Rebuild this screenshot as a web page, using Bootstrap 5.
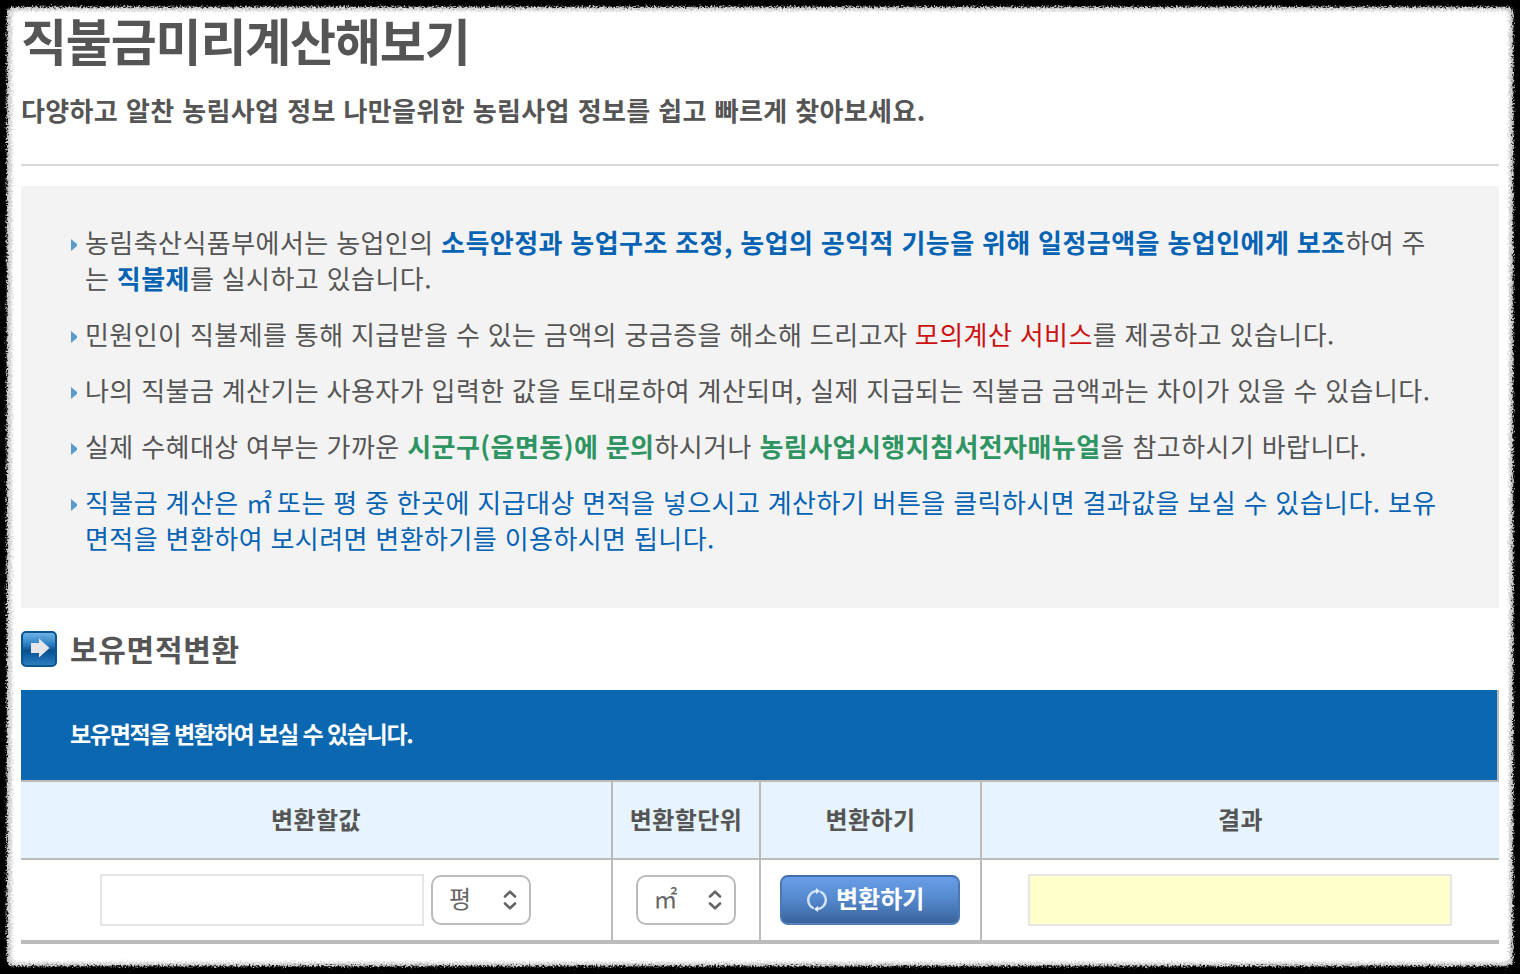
<!DOCTYPE html>
<html lang="ko">
  <head>
    <meta charset="UTF-8" />
    <meta name="viewport" content="width=device-width, initial-scale=1.0" />
    <title>직불금미리계산해보기</title>
    <link
      href="https://cdn.jsdelivr.net/npm/bootstrap@5.3.3/dist/css/bootstrap.min.css"
      rel="stylesheet"
    />

    <style>
      body {
        width: 1520px;
        height: 974px;
        overflow: hidden;
        background: #000;
        color: #555;
        font-family: "Noto Sans CJK KR", sans-serif;
      }
      /* torn paper edge behind the page */
      .paper-edge {
        position: absolute;
        inset: 0;
        z-index: 0;
      }
      .page-body {
        position: relative;
        z-index: 1;
        padding: 6px 21px 0;
        white-space: nowrap;
      }
      .page-title {
        height: 70px;
        line-height: 66px;
        font-size: 50px;
        letter-spacing: -1.15px;
      }
      .page-desc {
        height: 90px;
        padding-top: 16px;
        line-height: 36px;
        font-size: 26px;
        letter-spacing: 0.35px;
        word-spacing: 0.2px;
        border-bottom: 2px solid #d9d9d9;
      }
      .info-box {
        height: 422px;
        margin-top: 20px;
        padding: 38px 0 0 50px;
        background: #f3f3f3;
        font-size: 26px;
        line-height: 36px;
        letter-spacing: 0.45px;
        word-spacing: -0.3px;
      }
      .info-box li {
        display: flex;
        margin-bottom: 20px;
      }
      .info-box li svg {
        flex: none;
        width: 6px;
        height: 12px;
        margin: 15px 8px 0 0;
      }
      .area-unit {
        letter-spacing: -2.5px;
      }
      .c-blue {
        color: #0663b3;
      }
      .c-red {
        color: #cc1111;
      }
      .c-green {
        color: #2e9461;
      }
      .section-title {
        height: 82px;
        gap: 13px;
        font-size: 30px;
        letter-spacing: 0.7px;
        line-height: 40px;
      }
      .section-title span {
        padding-bottom: 2px;
      }
      .conv-table {
        width: 1478px;
        table-layout: fixed;
        border-collapse: separate;
        border-spacing: 0;
        text-align: center;
      }
      .conv-table th,
      .conv-table td {
        padding: 0;
        vertical-align: middle;
        border-right: 2px solid #bbb;
        border-bottom: 2px solid #bbb;
      }
      .conv-table .conv-caption {
        height: 92px;
        padding: 0 0 4px 49px;
        background: #0c67b1;
        color: #fff;
        text-align: left;
        font-size: 23px;
        letter-spacing: -1.3px;
        word-spacing: -0.5px;
      }
      .conv-table .conv-head th {
        height: 78px;
        padding-bottom: 2px;
        background: #e7f4fe;
        font-size: 24px;
        letter-spacing: 0.4px;
      }
      .conv-table td {
        height: 84px;
        border-bottom-width: 4px;
      }
      .conv-table .conv-head th:last-child,
      .conv-table td:last-child {
        border-right: 0;
      }
      .conv-table td:not(:first-child) {
        padding-right: 1px;
      }
      .value-group {
        gap: 7px;
        padding-right: 1px;
      }
      .value-input {
        width: 324px;
        height: 52px;
        border: 2px solid #e6e6e6;
        border-radius: 0;
      }
      .result-input {
        width: 424px;
        height: 52px;
        border: 2px solid #e6e6e6;
        border-radius: 0;
        background: #ffffcc;
      }
      .unit-select {
        width: 100px;
        height: 50px;
        padding: 0 12px 0 16px;
        border: 2px solid #bbb;
        border-radius: 10px;
        background: #fff;
        color: #666;
        font-size: 24px;
      }
      .unit-select span {
        padding-bottom: 4px;
      }
      .convert-btn {
        width: 180px;
        height: 50px;
        padding: 0 0 0 24px;
        border: 2px solid #4a78b5;
        border-top-color: #426fac;
        border-bottom-color: #5380b8;
        border-radius: 8px;
        background: linear-gradient(#699fe8, #568acf 45%, #38639b);
        color: #fff;
        font-size: 24px;
        font-weight: 700;
      }
      .convert-btn span {
        padding-bottom: 4px;
      }
    </style>
  </head>
  <body>
    <svg class="paper-edge" width="1520" height="974" viewBox="0 0 1520 974">
      <defs>
        <filter id="rough" filterUnits="userSpaceOnUse" x="0" y="0" width="1520" height="974" color-interpolation-filters="sRGB">
          <feTurbulence type="fractalNoise" baseFrequency="0.55" numOctaves="2" seed="4" />
          <feDisplacementMap in="SourceGraphic" scale="7" xChannelSelector="R" yChannelSelector="G" />
        </filter>
      </defs>
      <rect width="1520" height="974" fill="#000" />
      <g filter="url(#rough)">
        <rect width="1520" height="974" fill="#000" />
        <rect x="6.500" y="6.500" width="1507" height="960" rx="6" fill="#777" />
        <rect x="7.500" y="7.500" width="1505" height="958" rx="6" fill="#d0d0d0" />
        <rect x="10.500" y="9.500" width="1499" height="954" rx="5" fill="#e4e4e4" />
        <rect x="12.500" y="11.500" width="1496" height="950" rx="5" fill="#fff" />
      </g>
      <rect x="16" y="16" width="1489" height="942" fill="#fff" />
    </svg>

    <main class="page-body">
      <h1 class="page-title fw-bold m-0">직불금미리계산해보기</h1>
      <p class="page-desc fw-bold m-0">다양하고 알찬 농림사업 정보 나만을위한 농림사업 정보를 쉽고 빠르게 찾아보세요.</p>

      <ul class="info-box list-unstyled mb-0">
        <li>
          <svg viewBox="0 0 6 12"><path d="M0 0 6 5v2L0 12z" fill="#5a9bcb" /></svg>
          <div>
            농림축산식품부에서는 농업인의 <b class="c-blue">소득안정과 농업구조 조정, 농업의 공익적 기능을 위해 일정금액을 농업인에게 보조</b>하여 주<br />는 <b class="c-blue">직불제</b>를 실시하고 있습니다.
          </div>
        </li>
        <li>
          <svg viewBox="0 0 6 12"><path d="M0 0 6 5v2L0 12z" fill="#5a9bcb" /></svg>
          <div>민원인이 직불제를 통해 지급받을 수 있는 금액의 궁금증을 해소해 드리고자 <span class="c-red">모의계산 서비스</span>를 제공하고 있습니다.</div>
        </li>
        <li>
          <svg viewBox="0 0 6 12"><path d="M0 0 6 5v2L0 12z" fill="#5a9bcb" /></svg>
          <div>나의 직불금 계산기는 사용자가 입력한 값을 토대로하여 계산되며, 실제 지급되는 직불금 금액과는 차이가 있을 수 있습니다.</div>
        </li>
        <li>
          <svg viewBox="0 0 6 12"><path d="M0 0 6 5v2L0 12z" fill="#5a9bcb" /></svg>
          <div>실제 수혜대상 여부는 가까운 <b class="c-green">시군구(읍면동)에 문의</b>하시거나 <b class="c-green">농림사업시행지침서전자매뉴얼</b>을 참고하시기 바랍니다.</div>
        </li>
        <li>
          <svg viewBox="0 0 6 12"><path d="M0 0 6 5v2L0 12z" fill="#5a9bcb" /></svg>
          <div class="c-blue">직불금 계산은 <span class="area-unit">㎡</span> 또는 평 중 한곳에 지급대상 면적을 넣으시고 계산하기 버튼을 클릭하시면 결과값을 보실 수 있습니다. 보유<br />면적을 변환하여 보시려면 변환하기를 이용하시면 됩니다.</div>
        </li>
      </ul>

      <h2 class="section-title d-flex align-items-center fw-bold m-0">
        <svg width="36" height="36" viewBox="0 0 36 36">
          <defs>
            <linearGradient id="icoBg" x1="0" y1="0" x2="0" y2="1">
              <stop offset="0" stop-color="#74b5e8" />
              <stop offset="0.35" stop-color="#2f82c4" />
              <stop offset="0.55" stop-color="#064f8e" />
              <stop offset="0.75" stop-color="#1565a8" />
              <stop offset="1" stop-color="#307fc0" />
            </linearGradient>
          </defs>
          <rect x="1" y="1" width="34" height="34" rx="4" fill="url(#icoBg)" stroke="#0a548f" stroke-width="2" />
          <path d="M10 12h8V7.500l10.500 9.500-10.500 9.500V22h-8z" fill="#e6e6ea" />
        </svg>
        <span>보유면적변환</span>
      </h2>

      <table class="conv-table">
        <colgroup>
          <col width="592" />
          <col width="148" />
          <col width="221" />
          <col width="517" />
        </colgroup>
        <thead>
          <tr>
            <th class="conv-caption" colspan="4">보유면적을 변환하여 보실 수 있습니다.</th>
          </tr>
          <tr class="conv-head">
            <th>변환할값</th>
            <th>변환할단위</th>
            <th>변환하기</th>
            <th>결과</th>
          </tr>
        </thead>
        <tbody>
          <tr>
            <td>
              <div class="value-group d-flex justify-content-center align-items-center">
                <input class="value-input" type="text" />
                <button type="button" class="unit-select d-flex align-items-center justify-content-between">
                  <span>평</span>
                  <svg width="14" height="20" viewBox="0 0 14 20" fill="none" stroke="#666" stroke-width="2.600" stroke-linecap="round" stroke-linejoin="round"><path d="M2 6.500 7 1.700l5 4.800M2 13.500l5 4.800 5-4.800" /></svg>
                </button>
              </div>
            </td>
            <td>
              <button type="button" class="unit-select d-flex align-items-center justify-content-between mx-auto">
                <span class="area-unit">㎡</span>
                <svg width="14" height="20" viewBox="0 0 14 20" fill="none" stroke="#666" stroke-width="2.600" stroke-linecap="round" stroke-linejoin="round"><path d="M2 6.500 7 1.700l5 4.800M2 13.500l5 4.800 5-4.800" /></svg>
              </button>
            </td>
            <td>
              <button type="button" class="convert-btn d-flex align-items-center mx-auto">
                <svg class="me-2" width="22" height="24" viewBox="0 0 22 24" fill="none" stroke="#d3e2f6" stroke-width="2.400" stroke-linecap="round"><path d="M7 20A9 9 0 0 1 4.500 6Q6.500 3.500 10 3M15 4a9 9 0 0 1 2.500 14Q15.500 20.500 12 21" /><path d="M10 0v6l4-3zM12 18v6l-4-3z" fill="#e6effb" stroke="none" /></svg>
                <span>변환하기</span>
              </button>
            </td>
            <td><input class="result-input" type="text" readonly /></td>
          </tr>
        </tbody>
      </table>
    </main>

    <script src="https://cdn.jsdelivr.net/npm/bootstrap@5.3.3/dist/js/bootstrap.bundle.min.js"></script>
  </body>
</html>
